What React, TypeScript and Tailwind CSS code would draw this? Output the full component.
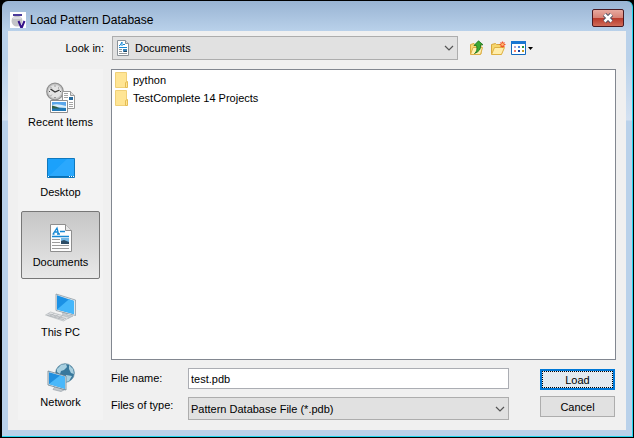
import type { ReactNode } from "react";

function AppLogo() {
  return (
    <svg viewBox="0 0 16 16" className="size-4 shrink-0" aria-hidden="true">
      <rect width="16" height="16" fill="#fff" />
      <circle cx="7" cy="9" r="5.5" fill="#c4c4c8" />
      <path d="M3 5h8v2H3z" fill="#dcdce2" />
      <path d="M3 2h9v2H3z" fill="#4b3b9a" />
      <path d="M8.500 9l2.500 6h1l2.500-6" fill="none" stroke="#35128a" strokeWidth="2" />
    </svg>
  );
}

function DocIcon({ className }: { className: string }) {
  return (
    <svg viewBox="0 0 22 28" className={className} aria-hidden="true">
      <path d="M.5.5h15l6 6v21H.5z" fill="#fdfdfd" stroke="#8e8e8e" />
      <path d="M15.500.5v6h6" fill="#e6e6e6" stroke="#8e8e8e" />
      <path d="M3 10L7 4l1.500 6M4.500 8H8M2.500 10h2M7 10h3M10 7.500h5M2 12.500h17" fill="none" stroke="#1688d4" strokeWidth="1.300" />
      <path d="M2 15.500h8M2 18.500h8M2 21.500h17M2 24.500h17" stroke="#9b9b9b" />
      <path d="M11 14h8v6h-8z" fill="#75b8e5" />
      <path d="M11 17l3-1 5 2v2h-8z" fill="#2c4c66" />
    </svg>
  );
}

function SmallDocIcon() {
  return (
    <svg viewBox="0 0 12 16" className="pointer-events-none absolute left-[5px] top-1 h-4 w-3" aria-hidden="true">
      <path d="M.5.5h8l3 3v12H.5z" fill="#fff" stroke="#8b9298" />
      <path d="M8.500.5v3h3" fill="#ddd" stroke="#8b9298" />
      <path d="M2 5.500h1L5 2v4M6 4.500h2M2 7.500h8" fill="none" stroke="#1688d4" />
      <path d="M2 9.500h3M2 11.500h3M2 13.500h8" stroke="#8f979c" />
      <path d="M6 9h4v3H6z" fill="#3a83b5" />
      <path d="M7 11h3v1H7z" fill="#24435c" />
    </svg>
  );
}

function RecentIcon() {
  return (
    <svg viewBox="0 0 32 32" className="size-8" aria-hidden="true">
      <circle cx="10" cy="9.500" r="8.300" fill="#c4c4c4" stroke="#8f8f8f" strokeWidth="1.200" />
      <circle cx="10" cy="9.500" r="6.500" fill="#e3e3e3" />
      <path d="M10 3.500v1M10 15v1M4 9.500h1M15 9.500h1M6 5.500l.7.700M14 5.500l-.7.700M6 13.500l.7-.7" stroke="#555" />
      <path d="M5.500 7l4.500 3 4.500-2" fill="none" stroke="#333" strokeWidth="1.300" />
      <path d="M17.500 9.500h8l4 4v13h-12z" fill="#fff" stroke="#999" />
      <path d="M25.500 9.500v4h4" fill="#ddd" stroke="#999" />
      <path d="M19 11.500h4M19 13.500h4M19 15.500h4M24 20.500h4M24 22.500h4M24 24.500h4" stroke="#a5a5a5" />
      <path d="M24 15h4v3h-4z" fill="#25699c" />
      <path d="M5.500 18.500h17v12h-17z" fill="#fff" stroke="#8d8d8d" />
      <path d="M7 20h14v9H7z" fill="#5aa6ea" />
      <path d="M7 23q5-2 14 1v2H7z" fill="#d7edfa" />
      <path d="M7 26q6-1 14 0v3H7z" fill="#2279b5" />
      <path d="M7 23.500q5 1 8 3H7z" fill="#305f45" />
    </svg>
  );
}

function DesktopIcon() {
  return (
    <svg viewBox="0 0 32 32" className="size-8" aria-hidden="true">
      <path d="M2.500 6.500h27v19h-27z" fill="#1ba1fb" stroke="#0f78bd" />
      <path d="M3 25L22 7h7v17H3z" fill="#35adff" opacity=".6" />
      <path d="M3 24.500h26" stroke="#0870b4" />
      <path d="M3 24.500h1M24 24.500h1M26 24.500h1M28 24.500h1" stroke="#fff" />
    </svg>
  );
}

function ComputerIcon() {
  return (
    <svg viewBox="0 0 32 32" className="size-8" aria-hidden="true">
      <path d="M17 19l5 2v2l6 1-5 2.500-8-2 3-2z" fill="#c5ccd1" stroke="#a3adb4" strokeWidth=".6" />
      <path d="M11 2l19.500 6v15.500L11 18.500z" fill="#dfe9ef" stroke="#72818b" strokeWidth=".6" />
      <path d="M12 3.200L29 9v13L12 17.500z" fill="#1b91e5" />
      <path d="M12 17.500L24 7.300 29 9v13z" fill="#45b7fb" />
      <path d="M.500 23l5-3 19 5.500-6 3.500z" fill="#e0e2e4" stroke="#b0b5b8" strokeWidth=".6" />
      <path d="M3 21.700l18 5M2 23.200l17 4.500M5 24l4.500-2.700M9 25.200l4.500-2.700M13 26.400l4.500-2.700" stroke="#a9aeb1" strokeWidth=".7" />
    </svg>
  );
}

function NetworkIcon() {
  return (
    <svg viewBox="0 0 32 32" className="size-8" aria-hidden="true">
      <circle cx="20" cy="11" r="9.300" fill="#38789c" stroke="#5e8aa1" strokeWidth=".8" />
      <path d="M12 7l4-4 5-1 1 3-3 3-3 1-1 3-3-2zM24 3l4 4 1 5-3-1-2-4zM21 13l6 1-3 5-3 1z" fill="#a9d0e0" />
      <path d="M11 23l5 1.500v2l4 1-4 2-8-2z" fill="#c3c9ce" stroke="#919ba2" strokeWidth=".6" />
      <path d="M3 9l18 5v14L3 23z" fill="#dce8ee" stroke="#5c7282" strokeWidth=".7" />
      <path d="M4 10.300l16 4.500v12L4 22z" fill="#208fdf" />
      <path d="M4 22l11-8.500 5 1.300v12z" fill="#4ab8fa" />
    </svg>
  );
}

function FolderIcon() {
  return (
    <svg viewBox="0 0 14 16" className="h-4 w-3.5 shrink-0" aria-hidden="true">
      <path d="M.5.5h11v15H.5z" fill="#ffe594" stroke="#f0d078" />
      <path d="M12.500 9.500v6h-2v-5z" fill="#ffe594" stroke="#e5bd55" />
    </svg>
  );
}

function UpFolderIcon() {
  return (
    <svg viewBox="0 0 16 16" className="size-4" aria-hidden="true">
      <path d="M1.500 14V4.500L5 3.500l1 1h6V14z" fill="#f7d873" stroke="#d8a93e" />
      <path d="M1.500 14.500l2.500-7h9.500l-2 7z" fill="#ffefb0" stroke="#dcae45" />
      <path d="M5.500 13.500q3.500-2.500 2-8H5L9.500.800l4.500 4h-2.500q1 6-6 8.700z" fill="#3aa935" stroke="#1b711d" strokeWidth=".8" />
    </svg>
  );
}

function NewFolderIcon() {
  return (
    <svg viewBox="0 0 16 16" className="size-4" aria-hidden="true">
      <path d="M1.500 14V4.500l4-1 1 1h5V14z" fill="#f7d66c" stroke="#d7a73c" />
      <path d="M1.500 14.500l3-7h10l-3 7z" fill="#ffedaa" stroke="#deb143" />
      <path d="M12.500 1.500v6M9.500 4.500h6M10.500 2.500l4 4M14.500 2.500l-4 4" stroke="#f0562c" strokeWidth="1.200" />
      <circle cx="12.500" cy="4.500" r="1.300" fill="#ffc070" />
    </svg>
  );
}

function ViewIcon() {
  return (
    <svg viewBox="0 0 22 16" className="h-4 w-[22px]" aria-hidden="true">
      <path d="M.5 1.500h14v13H.5z" fill="#fff" stroke="#1469bd" />
      <path d="M0 1h15v3H0z" fill="#1976d2" />
      <path d="M3 6h2v2H3z" fill="#b9a6ce" />
      <path d="M7 6h2v2H7z" fill="#4d88df" />
      <path d="M11 6h2v2h-2z" fill="#249345" />
      <path d="M3 10h2v2H3z" fill="#f47c62" />
      <path d="M7 10h2v2H7z" fill="#173e9d" />
      <path d="M11 10h2v2h-2z" fill="#c89b24" />
      <path d="M17 7h5l-2.500 3z" fill="#000" />
    </svg>
  );
}

function Chevron() {
  return (
    <svg viewBox="0 0 10 6" className="pointer-events-none absolute right-1 top-1/2 h-1.5 w-2.5 -translate-y-1/2" aria-hidden="true">
      <path d="M1 1l4 4 4-4" fill="none" stroke="#555" strokeWidth="1.200" />
    </svg>
  );
}

function Place({ label, icon, selected = false }: { label: string; icon: ReactNode; selected?: boolean }) {
  return (
    <button
      type="button"
      aria-pressed={selected}
      className={
        "flex h-[68px] w-full flex-col items-center rounded-xs border pt-2.5 " +
        (selected ? "border-[#777] bg-linear-to-b from-[#c6c6c6] to-[#e8e8e8]" : "border-transparent")
      }
    >
      {icon}
      <span className="leading-4">{label}</span>
    </button>
  );
}

export default function App() {
  return (
    <div className="min-h-screen bg-black font-['Liberation_Sans',Arial,sans-serif] text-[11px] leading-4 text-black">
      <main className="flex min-h-screen flex-col rounded-t-md border border-black bg-black pl-px">
        <div className="flex flex-1 flex-col rounded-t-md border-b border-r border-[#20d5ee] bg-[linear-gradient(to_bottom,#99b4d3_0px,#b9d1ea_30px,#b9d1ea_60px,#d3e1f1_119px,#b9d1ea_120px)] px-1.5 pb-1.5">
          <header className="flex h-[30px] shrink-0 items-center gap-1 pl-0.5 pt-2">
            <AppLogo />
            <h1 className="flex-1 text-xs">Load Pattern Database</h1>
            <button type="button" aria-label="Close" className="mb-1 mr-0.5 flex h-[18px] w-8 items-center justify-center rounded-xs border border-[#4b1a22] bg-[linear-gradient(to_bottom,#e8a99f_0%,#d78377_48%,#b8382a_50%,#cf6b58_100%)]">
              <svg viewBox="0 0 12 10" className="h-2.5 w-3" aria-hidden="true">
                <path d="M2.500 1.500l7 7M9.500 1.500l-7 7" stroke="#4b4f62" strokeWidth="4.500" />
                <path d="M2.500 1.500l7 7M9.500 1.500l-7 7" stroke="#fff" strokeWidth="2.500" />
              </svg>
            </button>
          </header>

          <div className="flex flex-1 flex-col bg-[#f0f0f0] px-2.5 pb-2.5 pt-[5px]">
            <div className="flex items-center gap-2">
              <label htmlFor="look-in" className="w-[86px] text-right">Look in:</label>
              <div className="relative flex-1">
                <select id="look-in" className="block h-6 w-full appearance-none border border-[#adadad] bg-[#e1e1e1] pl-[22px]">
                  <option>Documents</option>
                </select>
                <SmallDocIcon />
                <Chevron />
              </div>
              <div className="mr-[83px] flex gap-[5px] pl-[3px]">
                <button type="button" aria-label="Up one level"><UpFolderIcon /></button>
                <button type="button" aria-label="Create new folder"><NewFolderIcon /></button>
                <button type="button" aria-label="View menu"><ViewIcon /></button>
              </div>
            </div>

            <div className="mt-[9px] flex flex-1 gap-2">
              <nav className="flex w-[85px] shrink-0 flex-col items-center gap-0.5 bg-[#f3f3f3] px-[3px] pt-0.5">
                <Place label="Recent Items" icon={<RecentIcon />} />
                <Place label="Desktop" icon={<DesktopIcon />} />
                <Place label="Documents" icon={<DocIcon className="my-0.5 h-7 w-[22px]" />} selected />
                <Place label="This PC" icon={<ComputerIcon />} />
                <Place label="Network" icon={<NetworkIcon />} />
              </nav>

              <div className="flex flex-1 flex-col gap-2">
                <ul className="flex-1 border border-[#828790] bg-white px-[3px] py-px">
                  {["python", "TestComplete 14 Projects"].map((name) => (
                    <li key={name} className="flex h-[18px] items-center gap-1">
                      <FolderIcon />
                      {name}
                    </li>
                  ))}
                </ul>

                <form className="flex gap-[31px]" onSubmit={(event) => event.preventDefault()}>
                  <div className="grid flex-1 grid-cols-[77px_1fr] gap-y-2">
                    <label htmlFor="file-name" className="pt-0.5">File name:</label>
                    <input id="file-name" type="text" defaultValue="test.pdb" className="h-[21px] min-w-0 border border-[#abadb3] bg-white px-0.5" />
                    <label htmlFor="file-type">Files of type:</label>
                    <div className="relative">
                      <select id="file-type" className="block h-[23px] w-full appearance-none border border-[#adadad] bg-[#e1e1e1] px-0.5">
                        <option>Pattern Database File (*.pdb)</option>
                      </select>
                      <Chevron />
                    </div>
                  </div>
                  <div className="flex w-[76px] flex-col gap-1.5 pr-px pt-px">
                    <button type="submit" className="h-[21px] border-2 border-[#0078d7] bg-[#e3eaf0]">
                      <span className="flex h-full items-center justify-center border border-dotted border-black">Load</span>
                    </button>
                    <button type="button" className="h-[21px] border border-[#adadad] bg-[#e1e1e1]">Cancel</button>
                  </div>
                </form>
              </div>
            </div>
          </div>
        </div>
      </main>
    </div>
  );
}
